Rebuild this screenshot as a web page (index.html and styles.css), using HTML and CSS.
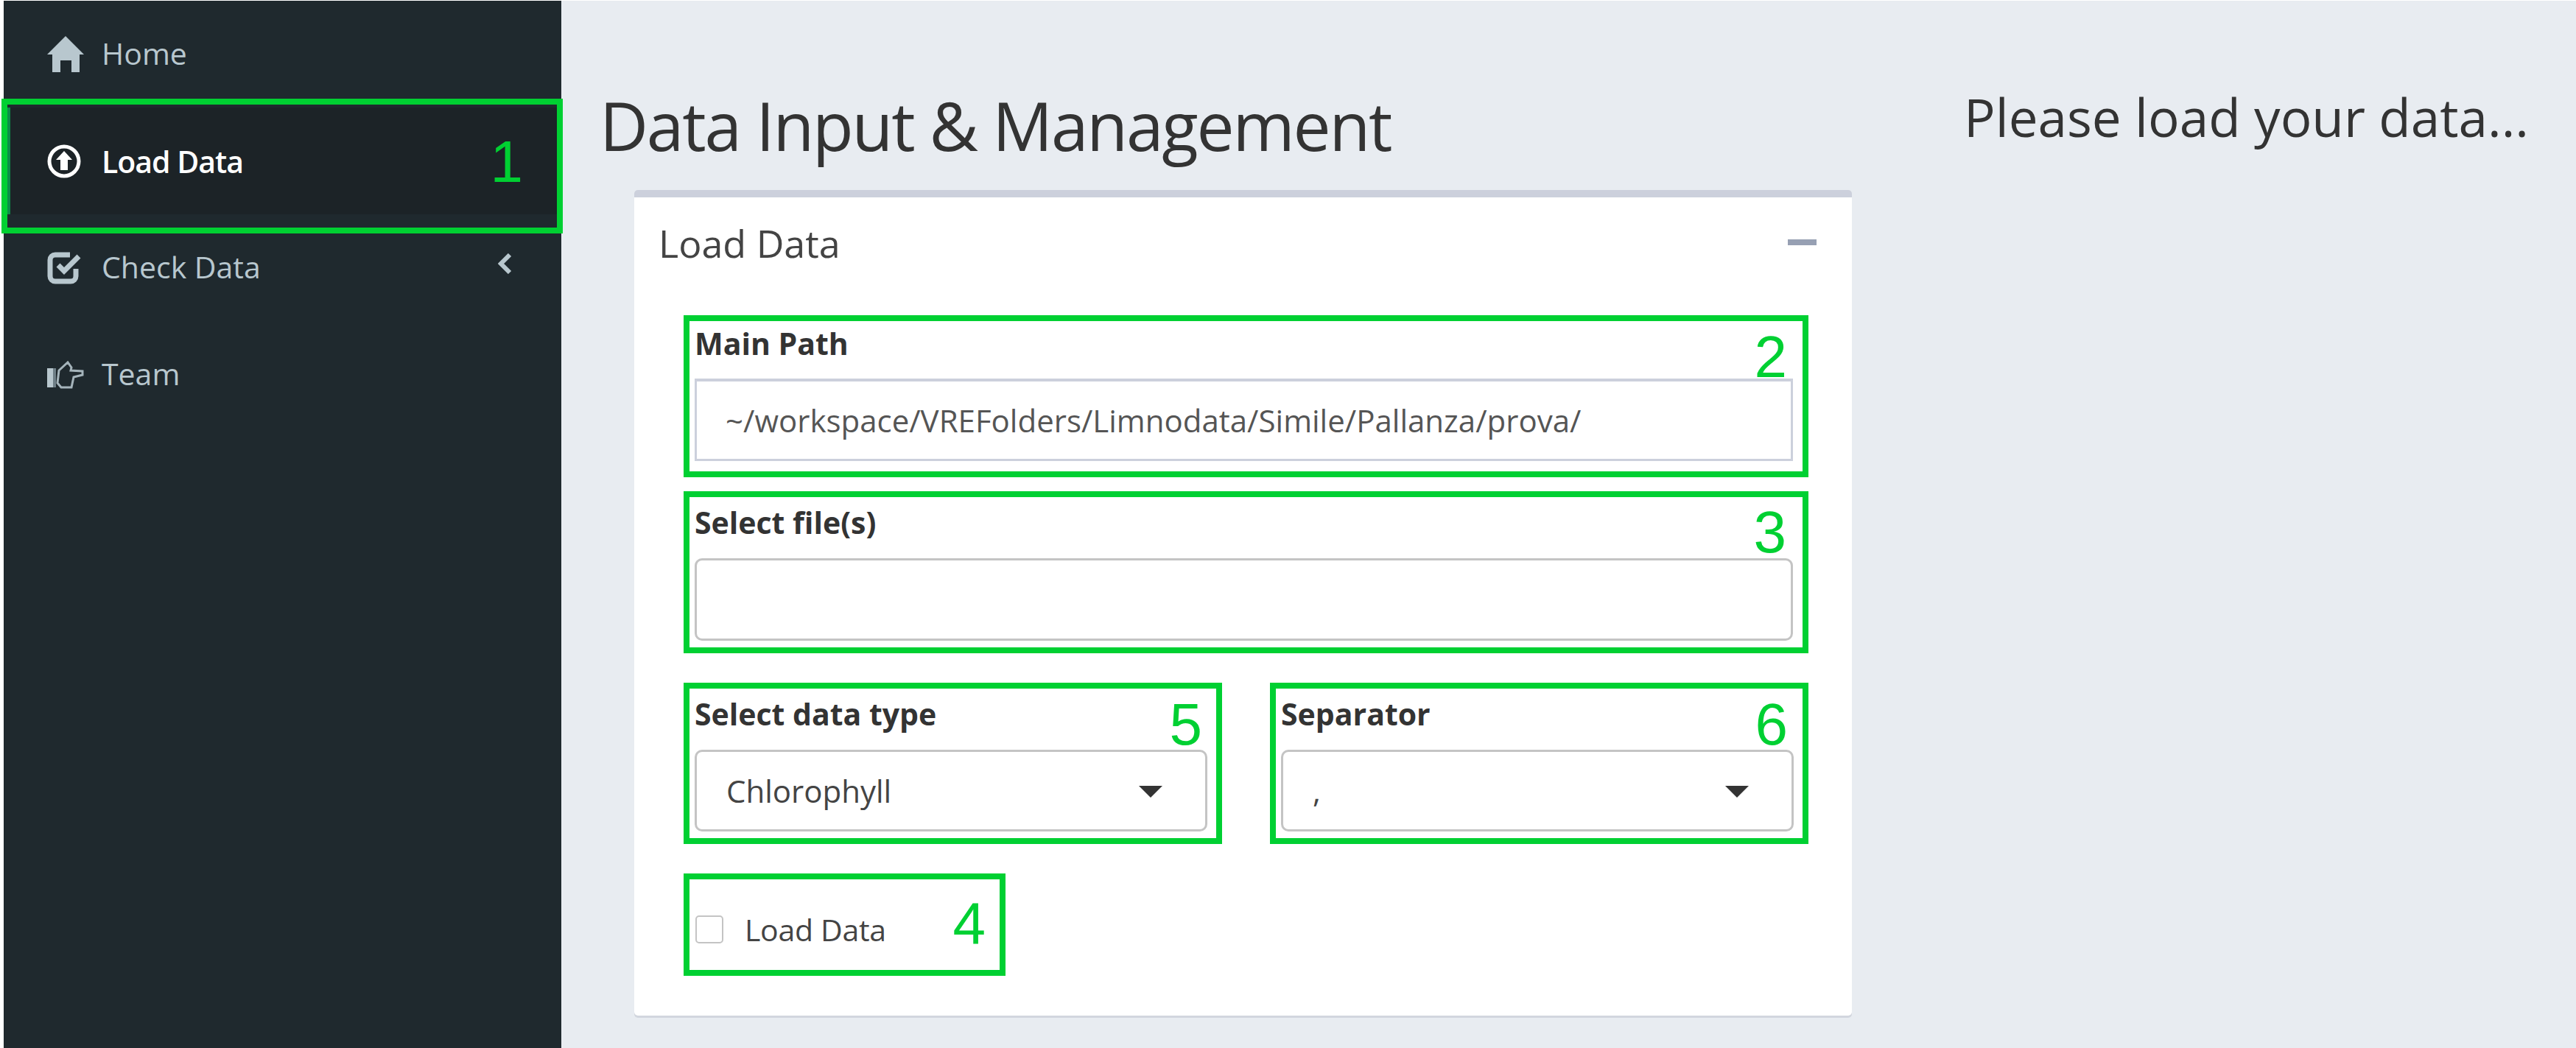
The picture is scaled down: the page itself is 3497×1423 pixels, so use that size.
FILE: index.html
```html
<!DOCTYPE html>
<html lang="en">
<head>
  <meta charset="UTF-8" />
  <title>Data Input &amp; Management</title>
  <link rel="stylesheet" href="styles.css">
</head>
<body>
  <div class="app">
    <nav class="sidebar">
      <a class="nav-item">
        <svg class="nav-icon" width="50" height="49" viewBox="0 0 50 49"><path d="M25 0L50 25H44V49H33V33H18V49H7V25H0Z" fill="#b8c7ce"/></svg>
        <span>Home</span>
      </a>
      <a class="nav-item active">
        <svg class="nav-icon" width="50" height="46" viewBox="0 0 50 46"><circle cx="23" cy="23" r="20" fill="none" stroke="#fff" stroke-width="5"/><path d="M23 9L34 21H28V35H18V21H12Z" fill="#fff"/></svg>
        <span>Load Data</span>
        <div class="mark mark-nav"><b class="num num-1">1</b></div>
      </a>
      <a class="nav-item">
        <svg class="nav-icon" width="50" height="44" viewBox="0 0 50 44"><path d="M31 4H11A7 7 0 0 0 4 11V33A7 7 0 0 0 11 40H32A7 7 0 0 0 39 33V23" fill="none" stroke="#b8c7ce" stroke-width="7"/><path d="M15 18L23 26L43 6" fill="none" stroke="#b8c7ce" stroke-width="7"/></svg>
        <span>Check Data</span>
        <svg class="chevron" width="19" height="28" viewBox="0 0 19 28"><path d="M16 2L4 14L16 26" fill="none" stroke="#b8c7ce" stroke-width="6"/></svg>
      </a>
      <a class="nav-item">
        <svg class="nav-icon" width="50" height="38" viewBox="0 0 50 38"><rect x="0" y="10" width="8" height="26" fill="#b8c7ce"/><rect x="8" y="10" width="4" height="26" fill="#6f7f87"/><path d="M16 13L28 2L33 9L32 13L48 14V19L36 22L33 36H19L14 30Z" fill="none" stroke="#a5b4bb" stroke-width="3"/></svg>
        <span>Team</span>
      </a>
    </nav>

    <main class="main">
      <div class="left-col">
        <h1 class="page-title">Data Input &amp; Management</h1>
        <section class="card">
          <div class="card-head">
            <h2 class="card-title">Load Data</h2>
            <span class="collapse"></span>
          </div>
          <div class="card-body">
            <div class="field field-path">
              <label class="field-label">Main Path</label>
              <input class="text-input" type="text" value="~/workspace/VREFolders/Limnodata/Simile/Pallanza/prova/" />
              <b class="num num-2">2</b>
            </div>
            <div class="field">
              <label class="field-label">Select file(s)</label>
              <div class="select-box"></div>
              <b class="num num-3">3</b>
            </div>
            <div class="field-row">
              <div class="field field-half">
                <label class="field-label">Select data type</label>
                <div class="select-box">Chlorophyll<i class="caret"></i></div>
                <b class="num num-5">5</b>
              </div>
              <div class="field field-half">
                <label class="field-label">Separator</label>
                <div class="select-box">,<i class="caret"></i></div>
                <b class="num num-6">6</b>
              </div>
            </div>
            <div class="field field-check">
              <span class="checkbox"></span>
              <span class="check-label">Load Data</span>
              <b class="num num-4">4</b>
            </div>
          </div>
        </section>
      </div>
      <p class="status">Please load your data...</p>
    </main>
  </div>
</body>
</html>
```

FILE: styles.css
```css
* {
  box-sizing: border-box;
}
html, body {
  margin: 0;
  height: 100%;
}
body {
  background: #fff;
  padding: 1px 0 0 5px;
  font-family: "Open Sans", "Noto Sans", sans-serif;
  color: #333;
  overflow: hidden;
}
.app {
  display: flex;
  height: 100%;
}

/* sidebar */
.sidebar {
  width: 757px;
  flex-shrink: 0;
  background: #1f292e;
}
.nav-item {
  position: relative;
  display: flex;
  align-items: center;
  height: 145px;
  padding-left: 59px;
  font-size: 41px;
  font-weight: 500;
  color: #b8c7ce;
}
.nav-item span {
  margin-bottom: 3px;
}
.nav-icon {
  width: 50px;
  margin-right: 24px;
  flex-shrink: 0;
}
.nav-item.active {
  color: #fff;
  font-weight: 600;
  letter-spacing: -1px;
  background: #1c2327;
  border-left: 9px solid #0c8c48;
  padding-left: 50px;
}
.nav-item.active span {
  margin-bottom: 0;
}
.chevron {
  position: absolute;
  left: 671px;
  top: 53px;
}

/* green annotation marks */
.mark-nav {
  position: absolute;
  left: -12px;
  right: -2px;
  top: -12px;
  bottom: -26px;
  border: 8px solid #00d032;
}
.num {
  position: absolute;
  font-family: "Liberation Sans", Arial, sans-serif;
  font-weight: 400;
  font-size: 80px;
  line-height: 80px;
  letter-spacing: 0;
  color: #00d032;
}
.num-1 { right: 46px; top: 38px; }
.num-2 { right: 21px; top: 9px; }
.num-3 { right: 22px; top: 8px; }
.num-5 { right: 19px; top: 9px; }
.num-6 { right: 20px; top: 9px; }
.num-4 { right: 19px; top: 20px; }

/* main area */
.main {
  flex: 1;
  display: flex;
  background: #e8ecf1;
  padding-left: 52px;
}
.left-col {
  width: 1700px;
  flex-shrink: 0;
}
.page-title {
  margin: 119px 0 38px;
  font-size: 91px;
  line-height: 100px;
  font-weight: 400;
  letter-spacing: -2.2px;
  color: #333;
}
.status {
  margin: 118px 0 0 152px;
  font-size: 71px;
  line-height: 80px;
  white-space: nowrap;
  color: #333;
}

/* card */
.card {
  margin-left: 47px;
  width: 1653px;
  background: #fff;
  border-top: 10px solid #ccd0dc;
  border-radius: 5px;
  box-shadow: 0 3px 0 #d2d6de;
}
.card-head {
  display: flex;
  justify-content: space-between;
  align-items: center;
  height: 160px;
  padding: 0 48px 38px 33px;
}
.card-title {
  margin: 0;
  font-size: 52px;
  font-weight: 400;
  color: #444;
}
.collapse {
  width: 39px;
  height: 8px;
  background: #97a0b3;
}
.card-body {
  display: flex;
  flex-direction: column;
  padding: 0 59px 54px 67px;
}

/* fields */
.field {
  position: relative;
  border: 8px solid #00d032;
  padding: 0 13px 9px 7px;
  margin-top: 19px;
}
.field:first-child {
  margin-top: 0;
}
.field-label {
  display: block;
  height: 83px;
  padding: 0 0 15px;
  font-size: 41px;
  line-height: 68px;
  font-weight: 700;
  color: #333;
}
.field-path {
  padding-bottom: 14px;
}
.field-path .field-label {
  height: 78px;
  line-height: 60px;
}
.text-input {
  display: block;
  width: 100%;
  height: 112px;
  padding: 0 39px;
  border: 3px solid #ccd0dc;
  border-top-width: 4px;
  background: #fff;
  font-family: inherit;
  font-size: 42px;
  color: #555;
}
.select-box {
  position: relative;
  display: flex;
  align-items: center;
  height: 112px;
  padding: 0 40px;
  border: 3px solid #c4c4c4;
  border-radius: 10px;
  font-size: 42px;
  color: #444;
}
.caret {
  position: absolute;
  right: 58px;
  top: 46px;
  border-top: 16px solid #333;
  border-left: 16px solid transparent;
  border-right: 16px solid transparent;
}
.field-row {
  display: flex;
  justify-content: space-between;
  margin-top: 40px;
}
.field-half {
  width: 731px;
  margin-top: 0;
  padding-right: 12px;
}
.field-half .select-box {
  height: 111px;
}
.field-check {
  display: flex;
  align-items: center;
  width: 437px;
  height: 139px;
  margin-top: 40px;
  padding: 12px 0 0 8px;
}
.checkbox {
  width: 38px;
  height: 38px;
  border: 2px solid #c4c4c4;
  border-radius: 5px;
  margin-right: 29px;
}
.check-label {
  font-size: 41px;
  letter-spacing: -0.3px;
  color: #444;
}
```
